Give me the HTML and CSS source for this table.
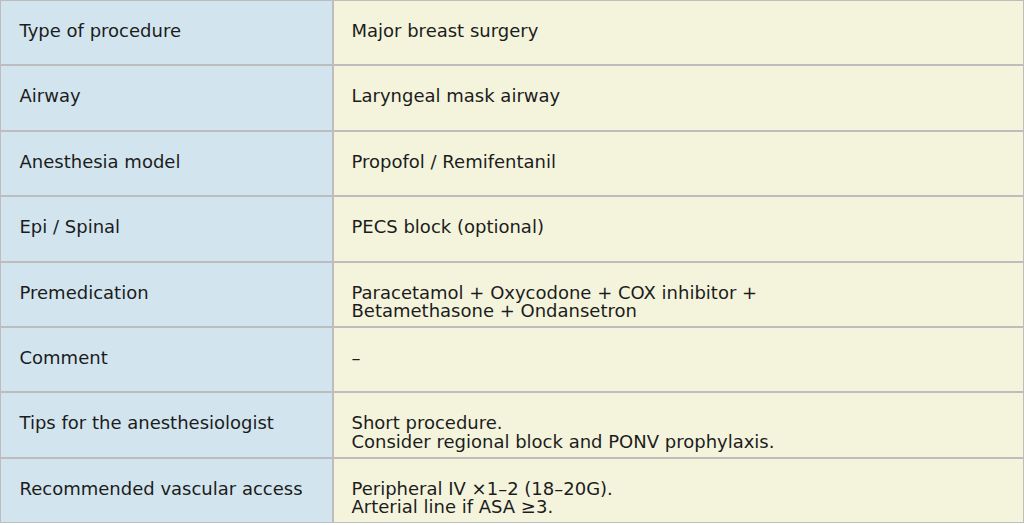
FILE: index.html
```html
<!DOCTYPE html>
<html lang="en">
<head>
<meta charset="utf-8">
<title>Procedure sheet</title>
<link rel="stylesheet" href="styles.css">
</head>
<body>
<div class="sheet">
  <div class="label">Type of procedure</div>
  <div class="value">Major breast surgery</div>
  <div class="label">Airway</div>
  <div class="value">Laryngeal mask airway</div>
  <div class="label">Anesthesia model</div>
  <div class="value">Propofol / Remifentanil</div>
  <div class="label">Epi / Spinal</div>
  <div class="value">PECS block (optional)</div>
  <div class="label">Premedication</div>
  <div class="value">Paracetamol + Oxycodone + COX inhibitor +<br>Betamethasone + Ondansetron</div>
  <div class="label">Comment</div>
  <div class="value">–</div>
  <div class="label">Tips for the anesthesiologist</div>
  <div class="value">Short procedure.<br>Consider regional block and PONV prophylaxis.</div>
  <div class="label">Recommended vascular access</div>
  <div class="value">Peripheral IV ×1–2 (18–20G).<br>Arterial line if ASA ≥3.</div>
</div>
</body>
</html>
```

FILE: styles.css
```css
html, body {
  margin: 0;
  padding: 0;
  background: #ffffff;
}

.sheet {
  box-sizing: border-box;
  width: 1024px;
  height: 523px;
  padding: 1px;
  display: grid;
  grid-template-columns: 330.5px 1fr;
  grid-template-rows: repeat(8, 1fr);
  gap: 2px;
  background: #bdbdbd;
  font-family: "DejaVu Sans", Verdana, sans-serif;
  font-size: 18px;
  line-height: 18.5px;
  color: #1c1c1c;
}

.label,
.value {
  padding: 21px 18px 0 18.5px;
  overflow: hidden;
}

.label {
  background: #d2e5ef;
}

.value {
  background: #f4f4dc;
  padding-left: 18px;
}
```
